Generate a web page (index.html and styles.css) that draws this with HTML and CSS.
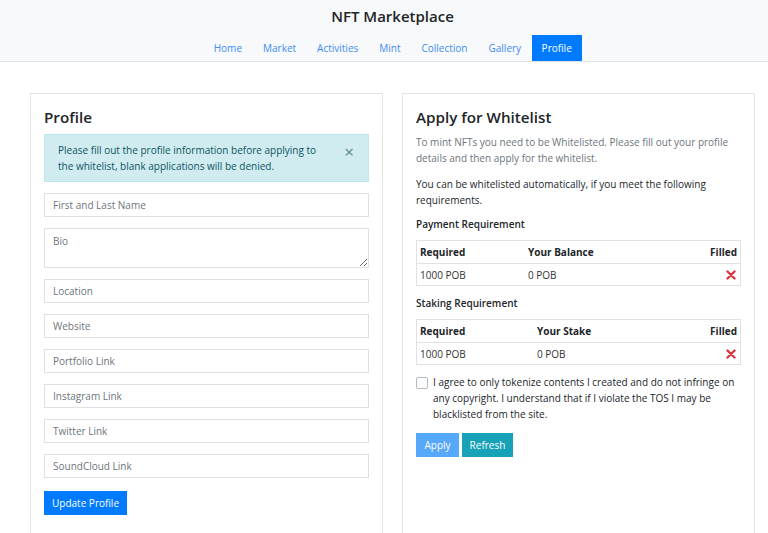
FILE: index.html
```html
<!DOCTYPE html>
<html>
<head>
<meta charset="utf-8">
<link rel="stylesheet" href="styles.css">
</head>
<body>
<div class="page">
  <header class="header">
    <h1 class="brand">NFT Marketplace</h1>
    <nav class="nav">
      <a class="nav-link">Home</a>
      <a class="nav-link">Market</a>
      <a class="nav-link">Activities</a>
      <a class="nav-link">Mint</a>
      <a class="nav-link">Collection</a>
      <a class="nav-link">Gallery</a>
      <a class="nav-link active">Profile</a>
    </nav>
  </header>
  <main class="main">
    <section class="card">
      <h2 class="card-title">Profile</h2>
      <div class="alert">
        <span class="alert-text">Please fill out the profile information before applying to the whitelist, blank applications will be denied.</span>
        <span class="close">&times;</span>
      </div>
      <div class="field"><input class="input" placeholder="First and Last Name"></div>
      <div class="field"><textarea class="input textarea" placeholder="Bio"></textarea></div>
      <div class="field"><input class="input" placeholder="Location"></div>
      <div class="field"><input class="input" placeholder="Website"></div>
      <div class="field"><input class="input" placeholder="Portfolio Link"></div>
      <div class="field"><input class="input" placeholder="Instagram Link"></div>
      <div class="field"><input class="input" placeholder="Twitter Link"></div>
      <div class="field"><input class="input" placeholder="SoundCloud Link"></div>
      <button class="btn btn-primary">Update Profile</button>
    </section>
    <section class="card">
      <h2 class="card-title">Apply for Whitelist</h2>
      <p class="muted">To mint NFTs you need to be Whitelisted. Please fill out your profile details and then apply for the whitelist.</p>
      <p class="text">You can be whitelisted automatically, if you meet the following requirements.</p>
      <h3 class="subhead">Payment Requirement</h3>
      <table class="table">
        <thead><tr><th class="c1">Required</th><th class="c2">Your Balance</th><th class="c3">Filled</th></tr></thead>
        <tbody><tr><td class="c1">1000 POB</td><td class="c2">0 POB</td><td class="c3"><svg class="x" viewBox="0 0 10 10" width="10" height="10"><path d="M1.5 1.5 L8.5 8.5 M8.5 1.5 L1.5 8.5" stroke="#dc3545" stroke-width="2.4" stroke-linecap="round"/></svg></td></tr></tbody>
      </table>
      <h3 class="subhead">Staking Requirement</h3>
      <table class="table">
        <thead><tr><th class="c1b">Required</th><th class="c2">Your Stake</th><th class="c3">Filled</th></tr></thead>
        <tbody><tr><td class="c1b">1000 POB</td><td class="c2">0 POB</td><td class="c3"><svg class="x" viewBox="0 0 10 10" width="10" height="10"><path d="M1.5 1.5 L8.5 8.5 M8.5 1.5 L1.5 8.5" stroke="#dc3545" stroke-width="2.4" stroke-linecap="round"/></svg></td></tr></tbody>
      </table>
      <label class="check">
        <span class="box"></span>
        <span>I agree to only tokenize contents I created and do not infringe on any copyright. I understand that if I violate the TOS I may be blacklisted from the site.</span>
      </label>
      <div class="actions">
        <button class="btn btn-light-blue">Apply</button>
        <button class="btn btn-info">Refresh</button>
      </div>
    </section>
  </main>
</div>
</body>
</html>
```

FILE: styles.css
```css
html, body { margin: 0; padding: 0; overflow: hidden; }
body { font-family: "Open Sans", "Noto Sans", sans-serif; font-size: 10px; line-height: 16px; color: #212529; background: #fff; }
.page { width: 785px; }
.header { background: #f8f9fa; border-bottom: 1px solid #dee2e6; height: 61px; display: flex; flex-direction: column; align-items: center; }
.brand { margin: 5px 0 0; font-size: 15px; font-weight: 600; line-height: 22px; color: #212529; }
.nav { display: flex; margin-top: 8px; }
.nav-link { display: block; padding: 0 10.5px; line-height: 26px; height: 26px; color: #3d8cf5; font-size: 10px; }
.nav-link.active { background: #007bff; color: #fff; padding: 0 10px; }
.main { display: flex; gap: 19px; padding: 31px 0 0 30px; }
.card { width: 325px; border: 1px solid #e3e3e3; padding: 11px 13px 20px; height: 460px; flex: none; }
.card-title { margin: 0 0 5px; font-size: 15.2px; font-weight: 600; line-height: 24px; }
.alert { position: relative; background: #d1ecf1; border: 1px solid #bee5eb; color: #0c5460; padding: 7px 45px 7px 13px; margin-bottom: 11px; }
.close { position: absolute; right: 14px; top: 10px; font-size: 17px; color: #55858e; line-height: 14px; }
.field { margin-bottom: 11px; }
.input { display: block; width: 100%; box-sizing: border-box; height: 24px; border: 1px solid #dde1e5; padding: 0 8px; font-family: inherit; font-size: 10px; color: #495057; background: #fff; outline: none; }
.input::placeholder { color: #6c757d; }
.textarea { height: 40px; padding-top: 4px; resize: vertical; line-height: 16px; }
.btn { border: 1px solid transparent; font-family: inherit; font-size: 10px; color: #fff; height: 24px; line-height: 16px; cursor: pointer; }
.btn-primary { background: #007bff; border-color: #007bff; margin-top: 2px; padding: 0 7px; }
.btn-light-blue { background: #56a8fa; border-color: #56a8fa; padding: 0 7.5px; }
.btn-info { background: #17a2b8; border-color: #17a2b8; padding: 0 6.5px; }
.muted { color: #6c757d; margin: 0 0 10px; }
.text { margin: 0 0 8px; }
.subhead { font-size: 10px; font-weight: 600; margin: 0 0 8px; line-height: 16px; }
.table { width: 100%; border-collapse: collapse; border: 1px solid #dee2e6; margin-bottom: 9px; }
.table th, .table td { padding: 3px 3px; line-height: 16px; text-align: left; }
.table th { font-weight: 700; border-bottom: 1px solid #dee2e6; }
.table td { padding-bottom: 2px; color: #333; }
.table .c1 { width: 102px; }
.table .c1b { width: 111px; }
.table .c3 { text-align: right; }
.x { display: inline-block; vertical-align: -1px; margin-right: 1px; }
.check { display: flex; gap: 5px; }
.check .box { flex: none; width: 10px; height: 10px; border: 1px solid #b5bcc2; border-radius: 2px; margin-top: 3px; }
.actions { display: flex; gap: 3px; margin-top: 11px; }
```
